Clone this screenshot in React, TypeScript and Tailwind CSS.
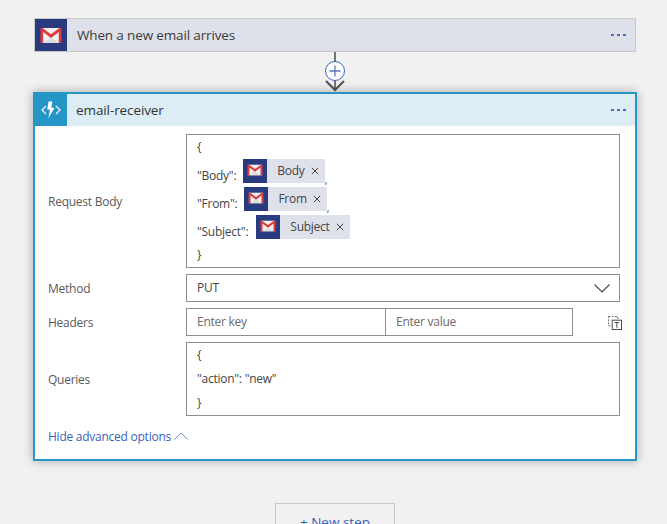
const font = "font-['Open_Sans','Noto_Sans',sans-serif]";

function Gmail({ className }: { className: string }) {
  return (
    <svg viewBox="0 0 22 17" className={className}>
      <rect x="1" y="1" width="20" height="15" fill="#f0f0f0" />
      <path d="M4 16 L11 10.5 L18 16 Z" fill="#dcdcdc" />
      <path d="M3.2 16 V5 L11 11 L18.8 5 V16 H21.5 V1 H19.5 L11 7.2 L2.5 1 H0.5 V16 Z" fill="#dc3a3f" />
    </svg>
  );
}

function Bolt() {
  return (
    <svg viewBox="0 0 22 20" className="w-[20px] h-[18px]">
      <path d="M5.5 5.5 L1 10 L5.5 14.5 M16.5 5.5 L21 10 L16.5 14.5" fill="none" stroke="#e8f5fb" strokeWidth="1.4" />
      <path d="M12.5 0.5 H8.3 L6.8 9.5 H9.8 L8 19.5 L15 7.5 H11.3 Z" fill="#ffffff" />
    </svg>
  );
}

function Dots() {
  return (
    <div className="flex gap-[3px] items-center">
      <span className="w-[3px] h-[2px] bg-[#4a6cc8]" />
      <span className="w-[3px] h-[2px] bg-[#4a6cc8]" />
      <span className="w-[3px] h-[2px] bg-[#4a6cc8]" />
    </div>
  );
}

function Token({ label, gap }: { label: string; gap: string }) {
  return (
    <div className="h-[24px] flex items-center bg-[#dfe1ea] text-[#444444]">
      <div className="w-[24px] h-[24px] bg-[#2a3a7e] flex items-start justify-center pt-[5px]">
        <Gmail className="w-[16px] h-[12px]" />
      </div>
      <span className="ml-[10px]">{label}</span>
      <svg viewBox="0 0 8 8" className={`w-[8px] h-[8px] ${gap} mr-[6px]`}>
        <path d="M0.8 0.8 L7.2 7.2 M7.2 0.8 L0.8 7.2" stroke="#444444" strokeWidth="1" />
      </svg>
    </div>
  );
}

function Row({ label, children, className }: { label: string; children: React.ReactNode; className: string }) {
  return (
    <div className={`flex items-center ${className}`}>
      <div className="w-[151px] pl-[13px] pt-[2px] text-[#5a5a5a]">{label}</div>
      {children}
    </div>
  );
}

export default function App() {
  return (
    <div className={`h-[524px] overflow-hidden bg-[#f1f1f1] flex flex-col items-center pl-[3px] pt-[18px] text-[12px] tracking-[-0.25px] ${font}`}>
      <div className="w-[602px] h-[34px] shrink-0 flex items-center bg-[#dfe1ea] border border-[#c8c8c8]">
        <div className="w-[32px] h-[32px] bg-[#2a3a7e] flex items-center justify-center">
          <Gmail className="w-[22px] h-[17px]" />
        </div>
        <span className="ml-[10px] text-[13.5px] text-[#3b3b3b] tracking-[-0.15px]">When a new email arrives</span>
        <div className="ml-auto mr-[9px]"><Dots /></div>
      </div>

      <svg viewBox="0 0 24 40" className="w-[24px] h-[40px] shrink-0">
        <path d="M12 0 V39" stroke="#555555" strokeWidth="1.6" />
        <path d="M3 29 L12 38 L21 29" stroke="#555555" strokeWidth="2.2" fill="none" />
        <circle cx="12" cy="19" r="9.5" fill="#ffffff" stroke="#3a62c4" strokeWidth="1" />
        <path d="M12 13.5 V24.5 M6.5 19 H17.5" stroke="#5a78c8" strokeWidth="1.3" />
      </svg>

      <div className="w-[604px] h-[369px] shrink-0 bg-white border-2 border-[#2596c6] shadow-[0_0_10px_rgba(0,0,0,0.3)] flex flex-col">
        <div className="h-[32px] shrink-0 flex items-center bg-[#dcedf5]">
          <div className="w-[32px] h-[32px] bg-[#2596c6] flex items-center justify-center">
            <Bolt />
          </div>
          <span className="ml-[9px] text-[13.5px] text-[#333333] tracking-[-0.1px]">email-receiver</span>
          <div className="ml-auto mr-[9px]"><Dots /></div>
        </div>

        <div className="flex flex-col gap-[6px] mt-[8px]">
          <Row label="Request Body" className="h-[134px]">
            <div className="w-[434px] h-[134px] border border-[#8f8f8f] pl-[10px] text-[#444444] flex flex-col">
              <div className="h-[24px] flex items-end pb-[3px]">{"{"}</div>
              <div className="h-[28px] flex items-start">
                <span className="pt-[8px] mr-[7px]">"Body":</span>
                <Token label="Body" gap="ml-[6px]" />
                <span className="text-[10px] leading-none pt-[16px]">,</span>
              </div>
              <div className="h-[28px] flex items-start">
                <span className="pt-[8px] mr-[7px]">"From":</span>
                <Token label="From" gap="ml-[6px]" />
                <span className="text-[10px] leading-none pt-[16px]">,</span>
              </div>
              <div className="h-[28px] flex items-start">
                <span className="pt-[8px] mr-[8px]">"Subject":</span>
                <Token label="Subject" gap="ml-[6px]" />
              </div>
              <div className="flex-1 flex items-center">{"}"}</div>
            </div>
          </Row>

          <Row label="Method" className="h-[28px]">
            <div className="w-[434px] h-[28px] border border-[#8f8f8f] pl-[10px] pr-[9px] flex items-center justify-between text-[#444444]">
              <span>PUT</span>
              <svg viewBox="0 0 16 9" className="w-[16px] h-[9px]">
                <path d="M0.5 0.5 L8 8 L15.5 0.5" fill="none" stroke="#444444" strokeWidth="1.1" />
              </svg>
            </div>
          </Row>

          <Row label="Headers" className="h-[28px]">
            <div className="w-[200px] h-[28px] border border-[#8f8f8f] pl-[10px] flex items-center text-[#6a6a6a]">Enter key</div>
            <div className="w-[188px] h-[28px] -ml-px border border-[#8f8f8f] pl-[10px] flex items-center text-[#6a6a6a]">Enter value</div>
            <svg viewBox="0 0 15 15" className="w-[14px] h-[14px] ml-[35px] mt-[2px]">
              <rect x="0.5" y="0.5" width="10" height="10" fill="none" stroke="#555555" strokeWidth="1" strokeDasharray="2 1.5" />
              <rect x="4.5" y="4.5" width="10" height="10" fill="#ffffff" stroke="#444444" strokeWidth="1" />
              <path d="M7 7 H12 M9.5 7 V13" stroke="#444444" strokeWidth="1" />
            </svg>
          </Row>

          <Row label="Queries" className="h-[74px]">
            <div className="w-[434px] h-[74px] border border-[#8f8f8f] pl-[10px] text-[#444444] flex flex-col">
              <div className="h-[24px] flex items-center">{"{"}</div>
              <div className="h-[24px] flex items-center">"action": "new"</div>
              <div className="h-[24px] flex items-center">{"}"}</div>
            </div>
          </Row>
        </div>

        <div className="mt-[12px] ml-[13px] flex items-center gap-[3px] text-[#3a5fb8]">
          <span>Hide advanced options</span>
          <svg viewBox="0 0 14 8" className="w-[14px] h-[8px] mb-[3px]">
            <path d="M0.5 7.5 L7 1 L13.5 7.5" fill="none" stroke="#6f8ccf" strokeWidth="1" />
          </svg>
        </div>
      </div>

      <div className="mt-[42px] w-[120px] h-[40px] shrink-0 border border-[#c8c8c8] flex items-start justify-center pt-[8px] text-[13.5px] text-[#3a5fb8] tracking-normal">
        + New step
      </div>
    </div>
  );
}
